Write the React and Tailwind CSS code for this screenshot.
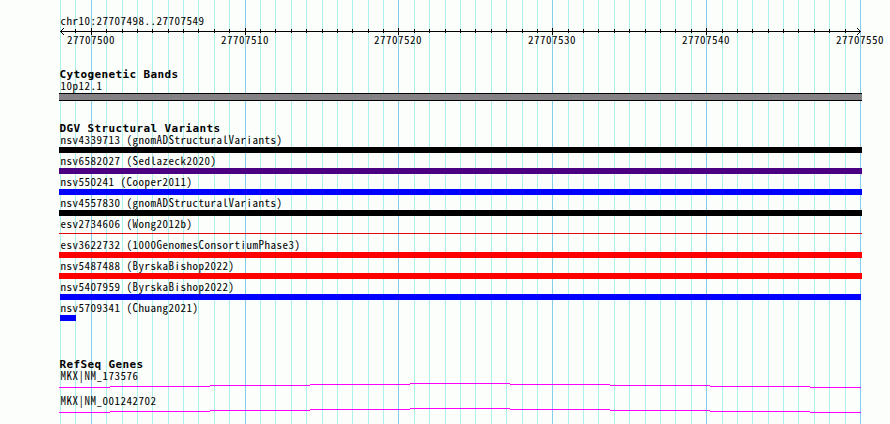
const START = 27707498;
const SPAN = 52;
const LEFT = 60;
const WIDTH = 800;

const variants = [
  { id: 'nsv4339713', study: 'gnomADStructuralVariants', bar: 'ml-[59px] w-[803px] h-1.5 bg-black' },
  { id: 'nsv6582027', study: 'Sedlazeck2020', bar: 'ml-[59px] w-[803px] h-1.5 bg-[#4b0082]' },
  { id: 'nsv550241', study: 'Cooper2011', bar: 'ml-[59px] w-[803px] h-1.5 bg-[#0000ff]' },
  { id: 'nsv4557830', study: 'gnomADStructuralVariants', bar: 'ml-[59px] w-[803px] h-1.5 bg-black' },
  { id: 'esv2734606', study: 'Wong2012b', bar: 'ml-[59px] mt-0.5 w-[803px] h-px bg-[#e8040c]' },
  { id: 'esv3622732', study: '1000GenomesConsortiumPhase3', bar: 'ml-[59px] w-[803px] h-1.5 bg-[#ff0000]' },
  { id: 'nsv5487488', study: 'ByrskaBishop2022', bar: 'ml-[59px] w-[803px] h-1.5 bg-[#ff0000]' },
  { id: 'nsv5407959', study: 'ByrskaBishop2022', bar: 'ml-[60px] w-[801px] h-1.5 bg-[#0000ff]' },
  { id: 'nsv5709341', study: 'Chuang2021', bar: 'ml-[60px] w-[16px] h-1.5 bg-[#0000ff]' },
];

const genes = ['MKX|NM_173576', 'MKX|NM_001242702'];

const ticks = Array.from({ length: SPAN + 1 }, (_, i) => ({
  x: Math.round(LEFT + (i * WIDTH) / SPAN),
  major: (START + i) % 10 === 0,
}));

const Grid = () => (
  <svg className="absolute inset-0" width="890" height="424" shapeRendering="crispEdges">
    {ticks.map((tick) => (
      <rect key={tick.x} x={tick.x} y="0" width="1" height="424" fill={tick.major ? '#84ceec' : '#acf0ec'} />
    ))}
  </svg>
);

const Ruler = () => (
  <svg className="block h-[7px] w-[890px]" viewBox="0 0 890 7" shapeRendering="crispEdges">
    <rect x="60" y="3" width="801" height="1" />
    {ticks.slice(1, -1).map((tick) => (
      <rect key={tick.x} x={tick.x} y={tick.major ? 0 : 1} width="1" height={tick.major ? 7 : 4} />
    ))}
    {[1, 2, 3].map((d) => (
      <g key={d}>
        <rect x={60 + d} y={3 - d} width="1" height="1" />
        <rect x={60 + d} y={3 + d} width="1" height="1" />
        <rect x={860 - d} y={3 - d} width="1" height="1" />
        <rect x={860 - d} y={3 + d} width="1" height="1" />
      </g>
    ))}
  </svg>
);

// Introns are drawn as a shallow peak over the whole region
const GeneLine = () => (
  <svg className="block h-[5px] w-[890px]" viewBox="0 0 890 5" shapeRendering="crispEdges" fill="#ff00ff">
    <rect x="59" y="4" width="51" height="1" />
    {[3, 2, 1, 0, 1, 2, 3].map((y, i) => (
      <rect key={i} x={110 + i * 100} y={y} width="100" height="1" />
    ))}
    <rect x="810" y="4" width="51" height="1" />
  </svg>
);

const Heading = ({ children }) => (
  <h2 className="h-3 pl-[59.5px] font-['DejaVu_Sans_Mono',monospace] text-[11px] font-bold leading-[13px] tracking-[0.378px]">
    {children}
  </h2>
);

const Label = ({ children }) => <p className="h-[13px] pl-[60.5px] leading-[11px]">{children}</p>;

const App = () => {
  return (
    <div className="relative h-[424px] w-[890px] overflow-hidden whitespace-pre bg-[#fcfefc] font-['Noto_Sans_CJK_JP',monospace] text-[11px] leading-[11px] tracking-[0.5px] text-black [font-feature-settings:'hwid']">
      <Grid />
      <main className="relative flex flex-col pt-[15px]">
        <section className="h-[53px]">
          <Label>chr10:27707498..27707549</Label>
          <Ruler />
          <div className="-mt-px flex gap-[106px] pl-[67px]">
            <span className="w-12">27707500</span>
            <span className="w-12">27707510</span>
            <span className="-ml-px w-12">27707520</span>
            <span className="w-12">27707530</span>
            <span className="w-12">27707540</span>
            <span className="w-12">27707550</span>
          </div>
        </section>

        <section className="h-[54px]">
          <Heading>Cytogenetic Bands</Heading>
          <Label>10p12.1</Label>
          <div className="ml-[59px] h-2 w-[803px] border-y border-black bg-[#848284]" />
        </section>

        <section className="h-[236px]">
          <Heading>DGV Structural Variants</Heading>
          {variants.map((item) => (
            <div key={item.id} className="flex h-[21px] flex-col">
              <Label>{item.id} ({item.study})</Label>
              <div className={item.bar} />
            </div>
          ))}
        </section>

        <section>
          <Heading>RefSeq Genes</Heading>
          {genes.map((gene) => (
            <div key={gene} className="h-[25px]">
              <Label>{gene}</Label>
              <GeneLine />
            </div>
          ))}
        </section>
      </main>
    </div>
  );
};

export default App;
